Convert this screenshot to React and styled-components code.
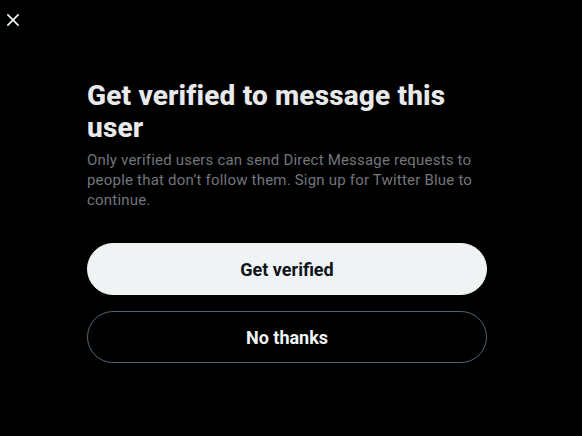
import React from 'react';
import styled, { createGlobalStyle } from 'styled-components';

const GlobalStyle = createGlobalStyle`
  html, body {
    margin: 0;
    padding: 0;
    background: #000;
  }
  body {
    font-family: Roboto, "Liberation Sans", sans-serif;
    color: #e7e9ea;
  }
`;

const Page = styled.div`
  width: 582px;
  height: 436px;
  background: #000;
  display: flex;
  flex-direction: column;
`;

const Header = styled.div`
  height: 40px;
  display: flex;
  align-items: center;
  padding-left: 3px;
`;

const CloseButton = styled.button`
  width: 20px;
  height: 20px;
  padding: 0;
  border: 0;
  background: transparent;
  color: #eff3f4;
  display: flex;
  cursor: pointer;

  svg {
    width: 20px;
    height: 20px;
    fill: currentColor;
  }
`;

const Body = styled.div`
  width: 400px;
  margin-left: 87px;
  padding-top: 40px;
  display: flex;
  flex-direction: column;
`;

const Title = styled.h1`
  margin: 0;
  font-size: 28px;
  line-height: 32px;
  font-weight: 800;
  letter-spacing: 0.15px;
  color: #e7e9ea;
`;

const Text = styled.p`
  margin: 6px 0 0;
  font-size: 15px;
  line-height: 20px;
  letter-spacing: 0.2px;
  color: #71767b;
`;

const Actions = styled.div`
  margin-top: 33px;
  display: flex;
  flex-direction: column;
  gap: 16px;
`;

const Button = styled.button`
  height: 52px;
  border-radius: 26px;
  font-family: inherit;
  font-size: 18px;
  font-weight: 700;
  cursor: pointer;
  border: 1px solid ${p => (p.$primary ? '#eff3f4' : '#536471')};
  background: ${p => (p.$primary ? '#eff3f4' : 'transparent')};
  color: ${p => (p.$primary ? '#0f1419' : '#eff3f4')};
`;

export default function App() {
  return (
    <Page>
      <GlobalStyle />
      <Header>
        <CloseButton aria-label="Close">
          <svg viewBox="0 0 24 24">
            <path d="M10.59 12L4.54 5.96l1.42-1.42L12 10.59l6.04-6.05 1.42 1.42L13.41 12l6.05 6.04-1.42 1.42L12 13.41l-6.04 6.05-1.42-1.42L10.59 12z" />
          </svg>
        </CloseButton>
      </Header>
      <Body>
        <Title>Get verified to message this user</Title>
        <Text>
          Only verified users can send Direct Message requests to people that don’t follow them. Sign up for Twitter Blue to continue.
        </Text>
        <Actions>
          <Button $primary>Get verified</Button>
          <Button>No thanks</Button>
        </Actions>
      </Body>
    </Page>
  );
}
